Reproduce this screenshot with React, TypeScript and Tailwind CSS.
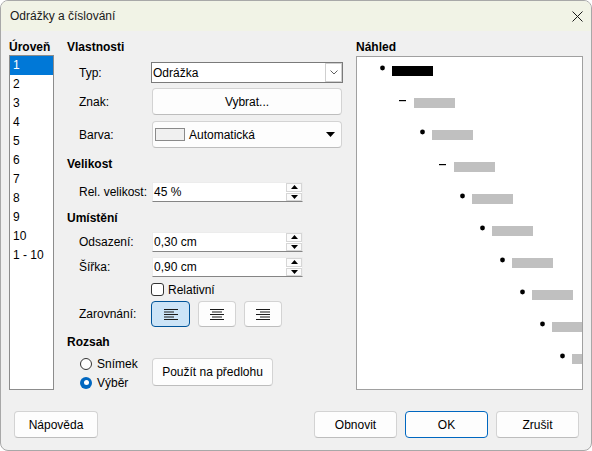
import React from "react";

const Btn = ({ children, className = "" }: { children?: React.ReactNode; className?: string }) => (
  <div
    className={
      "bg-[#fdfdfd] border border-[#d3d3d3] border-b-[#bdbdbd] rounded-[4px] flex items-center justify-center " +
      className
    }
  >
    {children}
  </div>
);

const Spin = ({ value }: { value: string }) => (
  <div className="w-[151px] h-[20px] bg-white border border-[#ececec] border-b-[#858585] flex items-stretch">
    <span className="pl-[1px] flex-1 flex items-center">{value}</span>
    <div className="w-[16px] flex flex-col gap-[1px]">
      <div className="flex-1 border border-[#d6d6d6] bg-[#fbfbfb] flex items-center justify-center">
        <svg width="7" height="4" viewBox="0 0 7 4">
          <path d="M0 4 L3.5 0 L7 4 Z" fill="#000" />
        </svg>
      </div>
      <div className="flex-1 border border-[#d6d6d6] bg-[#fbfbfb] flex items-center justify-center">
        <svg width="7" height="4" viewBox="0 0 7 4">
          <path d="M0 0 L3.5 4 L7 0 Z" fill="#000" />
        </svg>
      </div>
    </div>
  </div>
);

const Heading = ({ children, className = "" }: { children: React.ReactNode; className?: string }) => (
  <div className={"h-[15px] leading-[15px] font-bold " + className}>{children}</div>
);

const Label = ({ children }: { children: React.ReactNode }) => (
  <div className="ml-[12px] w-[72px] shrink-0">{children}</div>
);

const AlignIcon = ({ kind }: { kind: "l" | "c" | "r" }) => {
  const widths = [14, 10, 14, 10, 14];
  return (
    <svg width="14" height="11" viewBox="0 0 14 11">
      {widths.map((w, i) => {
        const x = kind === "l" ? 0 : kind === "c" ? (14 - w) / 2 : 14 - w;
        return <rect key={i} x={x} y={i * 2.5} width={w} height="1" fill="#1a1a1a" />;
      })}
    </svg>
  );
};

const Preview = () => {
  const items = Array.from({ length: 10 }, (_, i) => i);
  return (
    <svg width="225" height="332" viewBox="0 0 225 332" className="block">
      {items.map((i) => {
        const dash = i === 1 || i === 3;
        const cy = 11 + 32 * i;
        const rx = 35 + 20 * i + (dash ? 2 : 0);
        return (
          <g key={i}>
            {dash ? (
              <rect x={22 + 20 * i} y={cy} width="7" height="1.2" fill="#000" />
            ) : (
              <circle cx={25.5 + 20 * i} cy={cy} r="2.4" fill="#000" />
            )}
            <rect x={rx} y={9 + 32 * i} width="41" height="10" fill={i === 0 ? "#000" : "#c0c0c0"} />
          </g>
        );
      })}
    </svg>
  );
};

export default function App() {
  const levels = ["1", "2", "3", "4", "5", "6", "7", "8", "9", "10", "1 - 10"];
  return (
    <div className="w-[592px] h-[451px] bg-white font-['Liberation_Sans',Arial,sans-serif] text-[12px] text-black">
      <div className="w-[592px] h-[451px] rounded-[8px] border border-[#a8a8a8] overflow-hidden flex flex-col bg-[#f0f0f0]">
        {/* title bar */}
        <div className="h-[30px] shrink-0 bg-[#f1f3e6] flex items-center justify-between pl-[9px] pr-[8px]">
          <span className="text-[12px] text-[#1a1a1a]">Odrážky a číslování</span>
          <svg width="11" height="11" viewBox="0 0 11 11">
            <path d="M0.5 0.5 L10.5 10.5 M10.5 0.5 L0.5 10.5" stroke="#1a1a1a" strokeWidth="1" />
          </svg>
        </div>

        {/* body */}
        <div className="flex-1 flex flex-col px-[8px] pt-[9px]">
          <div className="flex">
            {/* levels */}
            <div className="w-[46px] flex flex-col">
              <Heading>Úroveň</Heading>
              <div className="h-[335px] bg-white border border-[#8c8c8c] flex flex-col">
                {levels.map((l, i) => (
                  <div
                    key={l}
                    className={
                      "h-[19px] leading-[19px] pl-[3px] " + (i === 0 ? "bg-[#0078d7] text-white" : "")
                    }
                  >
                    {l}
                  </div>
                ))}
              </div>
            </div>

            {/* properties */}
            <div className="ml-[13px] w-[276px] flex flex-col">
              <Heading>Vlastnosti</Heading>
              <div className="mt-[7px] h-[21px] flex items-center">
                <Label>Typ:</Label>
                <div className="w-[192px] h-[21px] bg-white border border-[#7a7a7a] flex items-stretch">
                  <span className="flex-1 pl-[1px] flex items-center">Odrážka</span>
                  <div className="w-[17px] border border-[#cfcfcf] bg-white flex items-center justify-center">
                    <svg width="8" height="5" viewBox="0 0 8 5">
                      <path d="M0.5 0.5 L4 4 L7.5 0.5" stroke="#606060" strokeWidth="1" fill="none" />
                    </svg>
                  </div>
                </div>
              </div>
              <div className="mt-[5px] h-[27px] flex items-center">
                <Label>Znak:</Label>
                <Btn className="ml-[1px] w-[190px] h-[27px]">Vybrat...</Btn>
              </div>
              <div className="mt-[6px] h-[27px] flex items-center">
                <Label>Barva:</Label>
                <Btn className="ml-[1px] w-[190px] h-[27px] !justify-start pl-[2px] pr-[6px]">
                  <div className="w-[30px] h-[13px] border border-[#8a8a8a] bg-[#f0f0f0]" />
                  <span className="ml-[4px] flex-1">Automatická</span>
                  <svg width="9" height="5" viewBox="0 0 9 5">
                    <path d="M0 0 L9 0 L4.5 5 Z" fill="#000" />
                  </svg>
                </Btn>
              </div>

              <Heading className="mt-[9px]">Velikost</Heading>
              <div className="mt-[10px] h-[20px] flex items-center">
                <Label>Rel. velikost:</Label>
                <div className="ml-[1px]">
                  <Spin value="45 %" />
                </div>
              </div>

              <Heading className="mt-[9px]">Umístění</Heading>
              <div className="mt-[6px] h-[20px] flex items-center">
                <Label>Odsazení:</Label>
                <div className="ml-[1px]">
                  <Spin value="0,30 cm" />
                </div>
              </div>
              <div className="mt-[5px] h-[20px] flex items-center">
                <Label>Šířka:</Label>
                <div className="ml-[1px]">
                  <Spin value="0,90 cm" />
                </div>
              </div>
              <div className="mt-[6px] h-[13px] flex items-center pl-[84px]">
                <div className="w-[13px] h-[13px] rounded-[3px] border border-[#333] bg-white" />
                <span className="ml-[4px]">Relativní</span>
              </div>
              <div className="mt-[5px] h-[26px] flex items-center">
                <Label>Zarovnání:</Label>
                <div className="flex gap-[8px]">
                  <div className="w-[39px] h-[26px] rounded-[4px] border border-[#005499] bg-[#cce4f7] flex items-center justify-center">
                    <AlignIcon kind="l" />
                  </div>
                  <Btn className="w-[38px] h-[26px]">
                    <AlignIcon kind="c" />
                  </Btn>
                  <Btn className="w-[38px] h-[26px]">
                    <AlignIcon kind="r" />
                  </Btn>
                </div>
              </div>

              <Heading className="mt-[8px]">Rozsah</Heading>
              <div className="mt-[4px] flex">
                <div className="ml-[13px] w-[72px] flex flex-col">
                  <div className="h-[19px] flex items-center">
                    <div className="w-[12px] h-[12px] rounded-full border border-[#333] bg-white" />
                    <span className="ml-[5px]">Snímek</span>
                  </div>
                  <div className="h-[19px] flex items-center">
                    <div className="w-[12px] h-[12px] rounded-full bg-[#0067c0] flex items-center justify-center">
                      <div className="w-[5px] h-[5px] rounded-full bg-white" />
                    </div>
                    <span className="ml-[5px]">Výběr</span>
                  </div>
                </div>
                <Btn className="mt-[4px] w-[121px] h-[28px]">Použít na předlohu</Btn>
              </div>
            </div>

            {/* preview */}
            <div className="ml-[13px] w-[227px] flex flex-col">
              <Heading>Náhled</Heading>
              <div className="mt-[1px] h-[334px] bg-white border border-[#a0a0a0] overflow-hidden">
                <Preview />
              </div>
            </div>
          </div>

          {/* bottom buttons */}
          <div className="mt-[19px] h-[27px] flex items-center pl-[5px] pr-[4px]">
            <Btn className="w-[84px] h-[27px]">Nápověda</Btn>
            <div className="flex-1" />
            <div className="flex gap-[8px]">
              <Btn className="w-[83px] h-[27px]">Obnovit</Btn>
              <div className="w-[83px] h-[27px] rounded-[4px] border border-[#0067c0] bg-[#fdfdfd] flex items-center justify-center">
                OK
              </div>
              <Btn className="w-[83px] h-[27px]">Zrušit</Btn>
            </div>
          </div>
        </div>
      </div>
    </div>
  );
}
